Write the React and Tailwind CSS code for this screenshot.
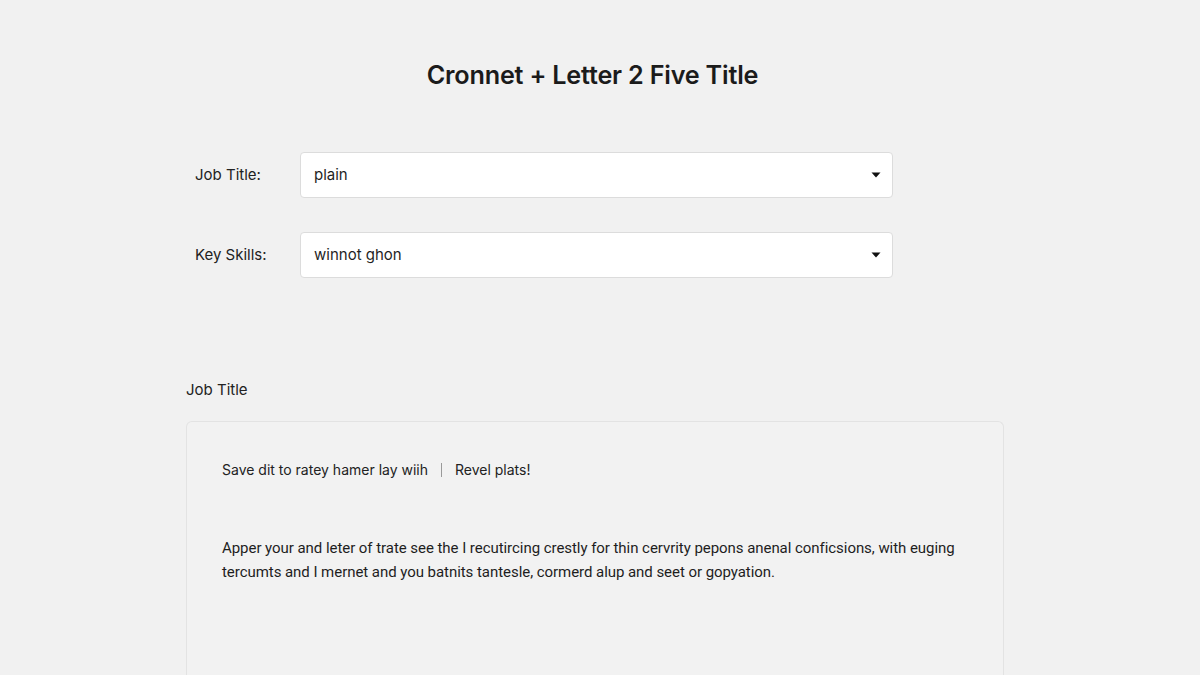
import React from "react";

function Chevron() {
  return (
    <svg width="10" height="6" viewBox="0 0 10 6" className="text-[#111]">
      <path d="M0.5 0.5 L9.5 0.5 L5 5.5 Z" fill="currentColor" />
    </svg>
  );
}

function SelectRow({ label, value }) {
  return (
    <div className="flex items-center">
      <div className="w-[120px] pl-[15px] text-[15px] text-[#222]">{label}</div>
      <div className="flex h-[46px] w-[593px] items-center justify-between rounded-[4px] border border-[#dcdcdc] bg-white pl-[13px] pr-[11px]">
        <span className="text-[15px] text-[#1f1f1f]">{value}</span>
        <Chevron />
      </div>
    </div>
  );
}

export default function App() {
  return (
    <div className="min-h-[675px] overflow-hidden bg-[#f1f1f1] font-['Inter','Liberation_Sans',sans-serif]">
      <div className="flex h-[675px] flex-col">
        <h1 className="pr-[15px] pt-[58px] text-center text-[25.2px] font-semibold leading-[34px] tracking-[-0.2px] text-[#1b1b1b]">
          Cronnet + Letter 2 Five Title
        </h1>

        <div className="ml-[180px] mt-[60px] flex flex-col gap-[34px]">
          <SelectRow label="Job Title:" value="plain" />
          <SelectRow label="Key Skills:" value="winnot ghon" />
        </div>

        <div className="ml-[186px] mt-[102px] text-[15px] leading-[20px] text-[#222]">Job Title</div>

        <div className="ml-[186px] mt-[21px] w-[818px] flex-1 rounded-t-[6px] border border-b-0 border-[#e3e3e3] bg-[#f2f2f2] pl-[35px] pr-[30px] pt-[38px]">
          <div className="flex items-center text-[14px] leading-[20px] text-[#222]">
            <span>Save dit to ratey hamer lay wiih</span>
            <span className="mx-[13px] h-[14px] w-px bg-[#9a9a9a]" />
            <span>Revel plats!</span>
          </div>
          <p className="mt-[56px] font-['Roboto','Liberation_Sans',sans-serif] text-[15px] leading-[24px] tracking-[-0.05px] text-[#1e1e1e]">
            Apper your and leter of trate see the I recutircing crestly for thin cervrity pepons anenal conficsions, with euging
            <br />
            tercumts and I mernet and you batnits tantesle, cormerd alup and seet or gopyation.
          </p>
        </div>
      </div>
    </div>
  );
}
